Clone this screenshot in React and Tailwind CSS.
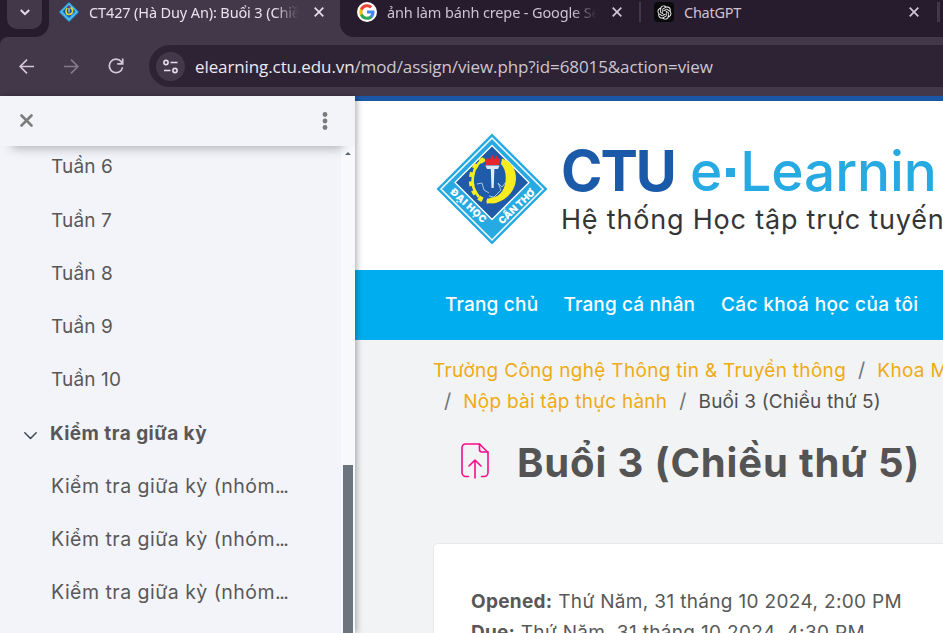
import { RiOpenaiFill } from 'react-icons/ri';

const inter = "font-['Inter','Noto_Sans',sans-serif]";
const noto = "font-['Noto_Sans','Open_Sans',sans-serif]";

function CtuLogo({ className }) {
  return (
    <svg className={className} viewBox="0 0 112 112">
      <path d="M56 0.5 111.5 56 56 111.5 0.5 56Z" fill="#27aae1" />
      <path d="M56 5 107 56 56 107 5 56Z" fill="none" stroke="#fff" strokeWidth="1.5" />
      <path d="M56 12.500 93 49.500 56 86.500 19 49.500Z" fill="#1f5ba8" stroke="#fff" strokeWidth="1.300" />
      <path d="M66 25.500C86 32 85 62 60 70C56 71 52 70 50 68L55 64.500C70 65 74 40 65 31Z" fill="#f7ec1f" />
      <path d="M49 26.500C36 31 32 52 43 64" fill="none" stroke="#f7ec1f" strokeWidth="2.600" />
      <path d="M48 26.500C34 32 31 53 42 64C46 67 50 69 56 67.500" fill="none" stroke="#f7ec1f" strokeWidth="5" strokeDasharray="4.500 4.500" />
      <path d="M49.500 32.500h14l-1.500 3.500h-11z" fill="#dfe7f2" />
      <path d="M54.800 36h3.600l-.7 19h-2.200z" fill="#e6edf7" />
      <path d="M50 32C48 28 51 27 51 24L54 27L56 21L58 26L61 22L61 26L64 25C64 29 64 30 63 32Z" fill="#e8242c" />
      <path d="M41 51 46 50 48 57 53 60M53 63 58 64 65 57 62 50 66 54 70 49" fill="none" stroke="#b9cfea" strokeWidth="0.9" />
      <text x="0" y="0" transform="translate(32.600 72.600) rotate(43)" textAnchor="middle" dominantBaseline="central" fill="#fff" fontFamily="Inter" fontWeight="900" fontSize="9.800" textLength="45">ĐẠI HỌC</text>
      <text x="0" y="0" transform="translate(80.600 73.400) rotate(-43)" textAnchor="middle" dominantBaseline="central" fill="#fff" fontFamily="Inter" fontWeight="900" fontSize="9.800" textLength="46">CẦN THƠ</text>
    </svg>
  );
}

function CtuFavicon() {
  return (
    <svg className="size-5 shrink-0" viewBox="0 0 20 20">
      <path d="M10 0 20 10 10 20 0 10Z" fill="#27a6e6" />
      <path d="M10 2.200 17.800 10 10 17.800 2.200 10Z" fill="none" stroke="#a8dcf5" strokeWidth=".6" />
      <path d="M10 3 16.200 9.200 10 15.400 3.800 9.200Z" fill="#1c4fa0" />
      <path d="M11.500 5.500C15 7.500 14 12 10 12.500C7 12.500 6 8.500 8.200 6" fill="none" stroke="#e8dc2a" strokeWidth="1.500" />
      <path d="M10 6v4.500" stroke="#dfe8f4" strokeWidth="1" />
      <path d="M8.800 5.400 10 3.400 11.300 5.400Z" fill="#e0343c" />
    </svg>
  );
}

function GoogleIcon() {
  return (
    <svg className="size-5 shrink-0" viewBox="0 0 20 20">
      <circle cx="10" cy="10" r="10" fill="#fff" />
      <g transform="translate(2.200 2.200) scale(.65)">
        <path fill="#4285F4" d="M23.500 12.270c0-.85-.08-1.670-.22-2.450H12v4.640h6.450a5.520 5.520 0 0 1-2.390 3.620v3.010h3.870c2.260-2.090 3.570-5.160 3.570-8.820z" />
        <path fill="#34A853" d="M12 24c3.240 0 5.950-1.080 7.930-2.910l-3.870-3.010c-1.080.72-2.450 1.150-4.060 1.150-3.130 0-5.780-2.110-6.730-4.960H1.280v3.100A12 12 0 0 0 12 24z" />
        <path fill="#FBBC05" d="M5.270 14.270a7.200 7.200 0 0 1 0-4.560v-3.100H1.280a12 12 0 0 0 0 10.760z" />
        <path fill="#EA4335" d="M12 4.770c1.760 0 3.350.61 4.600 1.800l3.430-3.430A11.960 11.960 0 0 0 1.280 6.610l3.990 3.100C6.220 6.880 8.870 4.770 12 4.770z" />
      </g>
    </svg>
  );
}

function ChatGptIcon() {
  return (
    <div className="size-5 shrink-0 rounded-[4px] bg-[#0a0a0a] flex items-center justify-center">
      <RiOpenaiFill className="size-[17px] text-[#f4f4f4]" />
    </div>
  );
}

function TabClose({ color }) {
  return (
    <svg className="size-[10px] shrink-0" viewBox="0 0 10 10" fill="none" stroke={color} strokeWidth="1.700">
      <path d="M.7.700 9.300 9.300M9.300.700.7 9.300" />
    </svg>
  );
}

function BrowserChrome() {
  return (
    <div className={`h-24 shrink-0 bg-[#261c2e] ${noto}`}>
      <div className="flex h-[37px] bg-[#42384a]">
        <div className="w-[49px] shrink-0 bg-[#261c2e] rounded-br-[14px] pl-[7px]">
          <div className="w-[35px] h-[29px] rounded-b-[10px] bg-[#42384a] flex justify-center pt-[9px]">
            <svg className="w-[10px] h-[7px]" viewBox="0 0 10 7" fill="none" stroke="#e6dcea" strokeWidth="2">
              <path d="M.8 1 5 5.200 9.200 1" />
            </svg>
          </div>
        </div>
        <div className="w-[291px] shrink-0 flex items-center pl-[10px] h-6">
          <CtuFavicon />
          <div className="ml-[10px] mt-[2px] w-[210px] overflow-hidden whitespace-nowrap text-[14.5px] tracking-[-0.13px] text-[#e9e1ec] [mask-image:linear-gradient(to_right,black_88%,transparent_100%)]">CT427 (Hà Duy An): Buổi 3 (Chiều thứ 5)</div>
          <div className="ml-[15px]"><TabClose color="#e6dcea" /></div>
        </div>
        <div className="flex-1 bg-[#261c2e] rounded-bl-[14px]">
          <div className="flex items-center h-6 pl-[17px]">
            <GoogleIcon />
            <div className="ml-[10px] mt-[2px] w-[210px] overflow-hidden whitespace-nowrap text-[14.5px] tracking-[-0.14px] text-[#cfc0d4] [mask-image:linear-gradient(to_right,black_88%,transparent_100%)]">ảnh làm bánh crepe - Google Search</div>
            <div className="ml-[15px]"><TabClose color="#d3c4d8" /></div>
            <div className="ml-[17px] w-[2px] h-5 bg-[#42384a]" />
            <div className="ml-[13px]"><ChatGptIcon /></div>
            <div className="ml-[10px] mt-[2px] w-[215px] text-[14.5px] tracking-[-0.25px] text-[#cfc0d4]">ChatGPT</div>
            <div className="ml-[10px]"><TabClose color="#d3c4d8" /></div>
            <div className="ml-[18px] w-[3px] h-5 bg-[#42384a]" />
          </div>
        </div>
      </div>
      <div className="h-[59px] bg-[#42384a] rounded-tl-[8px] flex items-start pt-2 pl-[19px]">
        <div className="flex items-center h-[42px]">
          <svg className="w-[15px] h-[15px]" viewBox="0 0 15 15" fill="none" stroke="#d6c6dc" strokeWidth="1.700">
            <path d="M15 7.500H1.200M8 .700 1.200 7.500 8 14.300" />
          </svg>
          <svg className="ml-[30px] w-[15px] h-[15px]" viewBox="0 0 15 15" fill="none" stroke="#85788c" strokeWidth="1.700">
            <path d="M0 7.500H13.800M7 .700 13.800 7.500 7 14.300" />
          </svg>
          <svg className="ml-[29px] w-4 h-4" viewBox="0 0 16 16" fill="none" stroke="#d6c6dc" strokeWidth="1.700">
            <path d="M14.600 9.400A6.700 6.700 0 1 1 13.200 3.600L14.300 5" />
            <path d="M14.700.500V5.800H9.200" />
          </svg>
        </div>
        <div className="ml-[25px] h-[42px] flex-1 bg-[#2d2335] rounded-l-full flex items-center pl-[7px]">
          <div className="size-[29px] rounded-full bg-[#42384a] flex items-center justify-center">
            <svg className="w-[17px] h-[15px]" viewBox="0 0 17 15" fill="none" stroke="#e6dcea" strokeWidth="1.600">
              <circle cx="4" cy="3.500" r="2.100" />
              <path d="M8.500 3.500H15.500M2 11.500H8.500" />
              <circle cx="13" cy="11.500" r="2.100" />
            </svg>
          </div>
          <div className="ml-[10px] mt-[2px] whitespace-nowrap text-[17px] tracking-[-0.1px] text-[#cdc6d0] font-['Open_Sans','Noto_Sans',sans-serif]">
            <span className="text-[#eee8f1]">elearning.ctu.edu.vn</span>/mod/assign/view.php?id=68015&amp;action=view
          </div>
        </div>
      </div>
    </div>
  );
}

const weeks = ['Tuần 6', 'Tuần 7', 'Tuần 8', 'Tuần 9', 'Tuần 10'];
const exams = ['Kiểm tra giữa kỳ (nhóm', 'Kiểm tra giữa kỳ (nhóm', 'Kiểm tra giữa kỳ (nhóm'];

function Sidebar() {
  return (
    <aside className="relative z-10 w-[355px] shrink-0 flex flex-col bg-[#f3f4f9] shadow-[2px_0_6px_rgba(0,0,0,0.3)] text-[#585858]">
      <div className="relative z-10 h-[50px] shrink-0 bg-[#f3f4f9] flex items-center justify-between pl-5 pr-[27px] pb-px shadow-[0_13px_12px_-12px_rgba(0,0,0,0.35)]">
        <svg className="size-[13px]" viewBox="0 0 13 13" fill="none" stroke="#7d7d7d" strokeWidth="2.600" strokeLinecap="round">
          <path d="M1.500 1.500 11.500 11.500M11.500 1.500 1.500 11.500" />
        </svg>
        <svg className="w-[6px] h-[18px]" viewBox="0 0 6 18" fill="#7a7a7a">
          <circle cx="3" cy="2.500" r="2.400" />
          <circle cx="3" cy="9" r="2.400" />
          <circle cx="3" cy="15.500" r="2.400" />
        </svg>
      </div>
      <div className="flex flex-1 min-h-0 overflow-hidden">
        <div className="flex-1 -mt-[5px] text-[19px]">
          {weeks.map((w) => (
            <div key={w} className="h-[53.2px] flex items-center pl-[51px] tracking-[0.15px]">{w}</div>
          ))}
          <div className="h-[53.2px] flex items-center pl-[24px] pt-[2px] font-bold tracking-[0.45px]">
            <svg className="w-[13px] h-[8px] mt-[2px]" viewBox="0 0 13 8" fill="none" stroke="#3d4852" strokeWidth="1.500" strokeLinecap="round" strokeLinejoin="round">
              <path d="M.8.800 6.500 6.500 12.200.800" />
            </svg>
            <span className="ml-[13px]">Kiểm tra giữa kỳ</span>
          </div>
          {exams.map((e, i) => (
            <div key={i} className="h-[53.2px] flex items-center pl-[51px] text-[19.5px] tracking-[0.48px] whitespace-nowrap">{e}<span className="tracking-[-1.5px]">...</span></div>
          ))}
        </div>
        <div className="w-[14px] bg-[#f8f9fc] flex flex-col items-center">
          <svg className="mt-[6px] w-[6px] h-[3px] shrink-0" viewBox="0 0 6 3"><path d="M3 0 6 3H0Z" fill="#5d6670" /></svg>
          <div className="mt-[310px] w-[10px] flex-1 bg-[#6c757d]" />
        </div>
      </div>
    </aside>
  );
}

function Header() {
  return (
    <header className="h-[174px] shrink-0 border-t-[5px] border-[#1c57a5] bg-white flex pl-[81px] pt-[31.5px]">
      <CtuLogo className="size-[112px] shrink-0" />
      <div className="ml-[13px] flex flex-col">
        <div className="flex h-[77px] items-center text-[56px] leading-none whitespace-nowrap">
          <span className="w-[129px] font-bold tracking-[-2px] text-[#1b59a9]">CTU</span>
          <span className="text-[55px] font-medium text-[#27aae1]">e</span>
          <span className="ml-[4px] mt-[3px] size-[9px] bg-[#27aae1]" />
          <span className="ml-[5px] text-[55px] font-medium tracking-[-0.1px] text-[#27aae1]">Learnin</span>
        </div>
        <div className="-mt-[7px] text-[27px] leading-[34px] tracking-[0.8px] text-[#353535] whitespace-nowrap">Hệ thống Học tập trực tuyến</div>
      </div>
    </header>
  );
}

function UploadIcon() {
  return (
    <svg className="w-[28px] h-[36px]" viewBox="0 0 28 36" fill="none" stroke="#f70d8a" strokeWidth="1.600" strokeLinecap="round" strokeLinejoin="round">
      <path d="M7.500 33.500H5A4 4 0 0 1 1 29.500V4.500A3.500 3.500 0 0 1 4.500 1H18.500L27 9.500V29.500A4 4 0 0 1 23 33.500H20.500" />
      <path d="M18.500 1V6.500A2.500 2.500 0 0 0 21 9H27" />
      <path d="M14 35V17M8 23 14 17 20 23" />
    </svg>
  );
}

export default function App() {
  const slash = <span className="text-[#6c757d] text-[20px]">/</span>;
  return (
    <div className={`w-[943px] h-[633px] overflow-hidden flex flex-col ${inter}`}>
      <BrowserChrome />
      <div className="flex flex-1 min-h-0">
        <Sidebar />
        <main className="w-[588px] overflow-hidden bg-[#f2f3f5] flex flex-col text-[#585858]">
          <Header />
          <nav className="h-[70px] shrink-0 bg-[#00aeef] flex items-center pl-[90px] text-[19px] font-medium text-white whitespace-nowrap">
            <a className="w-[118.500px] tracking-[0.2px]">Trang chủ</a>
            <a className="w-[157.500px] tracking-[0.15px]">Trang cá nhân</a>
            <a className="tracking-[0.37px]">Các khoá học của tôi</a>
          </nav>
          <div className="pl-[78px] pt-[15px] text-[19px] leading-[31px] whitespace-nowrap text-[#eeab14]">
            <div className="flex gap-[12px]">
              <span className="tracking-[0.31px]">Trường Công nghệ Thông tin &amp; Truyền thông</span>
              {slash}
              <span className="tracking-[0.3px]">Khoa Mạng máy tính</span>
            </div>
            <div className="flex gap-[12px] pl-[11px]">
              {slash}
              <span className="tracking-[0.25px]">Nộp bài tập thực hành</span>
              {slash}
              <span className="tracking-[0.14px] text-[#4f4f4f]">Buổi 3 (Chiều thứ 5)</span>
            </div>
          </div>
          <div className="mt-[20px] pl-[106px] flex items-center gap-[28px]">
            <UploadIcon />
            <h1 className="mt-[4px] text-[40px] leading-[44px] font-bold tracking-[0.85px] text-[#545454] whitespace-nowrap">Buổi 3 (Chiều thứ 5)</h1>
          </div>
          <div className="mt-[58px] ml-[78px] flex-1 bg-white border-t border-l border-[#e8e9ec] rounded-tl-[5px] pl-[37px] pt-[42px] text-[19px] leading-[31px] whitespace-nowrap">
            <div className="tracking-[0.34px]"><b className="tracking-[0.3px]">Opened:</b> Thứ Năm, 31 tháng 10 2024, 2:00 PM</div>
            <div className="tracking-[0.34px]"><b className="tracking-[0.2px]">Due:</b> Thứ Năm, 31 tháng 10 2024, 4:30 PM</div>
          </div>
        </main>
      </div>
    </div>
  );
}
